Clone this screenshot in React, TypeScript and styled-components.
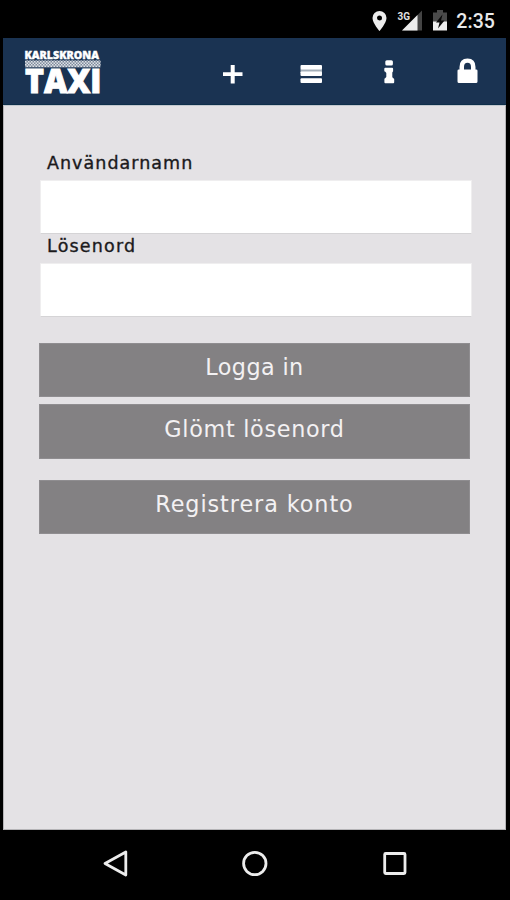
import React from "react";
import styled, { createGlobalStyle } from "styled-components";

const GlobalStyle = createGlobalStyle`
  * { box-sizing: border-box; }
  body { margin: 0; background: #000; }
`;

const Device = styled.div`
  width: 510px;
  height: 900px;
  background: #000;
  display: flex;
  flex-direction: column;
  overflow: hidden;
  font-family: "DejaVu Sans", Inter, sans-serif;
`;

const StatusBar = styled.div`
  height: 38px;
  flex: none;
  display: flex;
  justify-content: flex-end;
  align-items: flex-start;
  padding: 10px 15px 0 0;
`;

const StatusIcons = styled.svg`
  display: block;
  width: 78px;
  height: 24px;
  margin-right: 7px;
`;

const Clock = styled.time`
  font: 500 19.5px/23px Roboto, sans-serif;
  letter-spacing: 0.1px;
  color: #e9e9e9;
`;

const Header = styled.header`
  height: 67px;
  flex: none;
  margin: 0 4px 0 3px;
  padding-left: 19px;
  display: flex;
  justify-content: space-between;
  background: #1a3352;
  border-bottom: 1px solid #0e2f4a;
`;

const Logo = styled.svg`
  display: block;
  width: 84px;
  height: 50px;
  margin-top: 10px;
  overflow: visible;
`;

const Actions = styled.nav`
  display: grid;
  grid-template-columns: repeat(4, 78px);
`;

const Action = styled.button`
  border: 0;
  padding: 0;
  background: none;
  height: 66px;
`;

const ActionIcon = styled.svg`
  display: block;
  width: 78px;
  height: 66px;
  fill: #fff;
`;

const Screen = styled.main`
  flex: 1;
  margin: 0 4px 0 3px;
  padding: 45px 35px 0 36px;
  background: #e4e2e5;
  border: 1px solid #b5b4b7;
  border-top-color: #c3c8cf;
`;

const Form = styled.form`
  display: flex;
  flex-direction: column;
`;

const Label = styled.label<{ $spacing: number }>`
  height: 29px;
  padding-left: 7px;
  font-size: 17.5px;
  line-height: 25px;
  letter-spacing: ${(p) => p.$spacing}px;
  color: #1b1a1c;
  -webkit-text-stroke: 0.35px #1b1a1c;
  white-space: nowrap;
`;

const Input = styled.input`
  width: 432px;
  height: 54px;
  border: 1px solid #efeeef;
  border-bottom-color: #d5d4d6;
  border-radius: 1px;
  padding: 0 10px;
  background: #fff;
  font: inherit;
  outline: 0;
`;

const Buttons = styled.div`
  display: flex;
  flex-direction: column;
  gap: 7px;
  margin: 26px 0 0 -1px;
`;

const Button = styled.button<{ $spacing: number; $separate?: boolean }>`
  width: 431px;
  height: 54.3px;
  margin-top: ${(p) => (p.$separate ? 14 : 0)}px;
  padding: 0 0 5.4px;
  border: 1px solid #8f8d90;
  background: #838183;
  color: #f3f1f3;
  font-family: inherit;
  font-size: 22.3px;
  line-height: 28px;
  letter-spacing: ${(p) => p.$spacing}px;
`;

const NavBar = styled.div`
  height: 70px;
  flex: none;
  display: flex;
  justify-content: center;
`;

const NavIcon = styled.svg`
  display: block;
  width: 139.5px;
  height: 68px;
  fill: none;
  stroke: #ececec;
  stroke-width: 2.8;
  stroke-linejoin: round;
`;

export default function App() {
  return (
    <>
      <GlobalStyle />
      <Device>
        <StatusBar>
          <StatusIcons viewBox="371 10 78 24">
            <path
              d="M379.5 11a7 7 0 0 0-7 7c0 5 7 13 7 13s7-8 7-13a7 7 0 0 0-7-7Zm0 4.500a2.500 2.500 0 1 1 0 5 2.500 2.500 0 0 1 0-5Z"
              fill="#ededed"
            />
            <path d="M422 10.500V30.500H402Z" fill="#444" />
            <path d="M417.500 15V30.500H402Z" fill="#ededed" />
            <text
              x="397.500"
              y="19.500"
              fontFamily="Roboto, sans-serif"
              fontWeight="700"
              fontSize="10.500"
              textLength="12.500"
              lengthAdjust="spacingAndGlyphs"
              fill="#e0e0e0"
              stroke="#000"
              strokeWidth="1.500"
              paintOrder="stroke"
            >
              3G
            </text>
            <path d="M433 12.500h4V10h6v2.500h4V22h-14Z" fill="#4a4a4a" />
            <path d="M433 21.500h14v9h-14Z" fill="#ededed" />
            <path d="M442.500 14.500 436 22.500h3.500l-1.500 6 6.500-8h-3.500Z" fill="#080808" />
          </StatusIcons>
          <Clock>2:35</Clock>
        </StatusBar>

        <Header>
          <Logo viewBox="22 48 84 50" role="img" aria-label="Karlskrona Taxi">
            <defs>
              <pattern id="checks" x="25" y="61" width="3" height="3" patternUnits="userSpaceOnUse">
                <path d="M0 0h1.500v1.500H0ZM1.500 1.500H3V3H1.500Z" fill="#fff" />
              </pattern>
            </defs>
            <g fill="#fff" stroke="#fff" fontFamily="'Open Sans', sans-serif" fontWeight="800">
              <text x="24.500" y="58.600" fontSize="11" textLength="74.500" lengthAdjust="spacingAndGlyphs" strokeWidth=".4">
                KARLSKRONA
              </text>
              <text x="25" y="92.900" fontSize="33" textLength="76.500" lengthAdjust="spacingAndGlyphs" strokeWidth="1">
                TAXI
              </text>
            </g>
            <path d="M25 60.500h75.500v7H25Z" fill="#7d8a9c" />
            <path d="M25 60.500h75.500v6.500H25Z" fill="url(#checks)" opacity=".75" />
          </Logo>
          <Actions>
            <Action aria-label="Ny">
              <ActionIcon viewBox="194 38 78 66">
                <path d="M230.700 65h4v7.200h7.800v3.800h-7.800v7.500h-4V76H223v-3.800h7.700Z" />
              </ActionIcon>
            </Action>
            <Action aria-label="Meny">
              <ActionIcon viewBox="272 38 78 66">
                <rect x="300.500" y="69" width="21.500" height="4" fill="#a4afb9" />
                <rect x="300.500" y="65" width="21.500" height="4.500" rx="1" />
                <rect x="300.500" y="71.600" width="21.500" height="4.400" rx="1" />
                <rect x="300.500" y="78.200" width="21.500" height="4.800" rx="1" />
              </ActionIcon>
            </Action>
            <Action aria-label="Information">
              <ActionIcon viewBox="350 38 78 66">
                <rect x="385.300" y="60.200" width="7.600" height="5.400" rx="1.500" />
                <path d="M385.300 67.800h6.800q1 0 1 1v2.400l-.8 1.300v4.500l.8 1.300h.2q.9 0 .9.900v3q0 1-.9 1h-8q-.9 0-.9-1v-3q0-.9.700-.9l1.200-1.300v-4l-1-1.200q-1 0-1-1v-2q0-1 1-1Z" />
              </ActionIcon>
            </Action>
            <Action aria-label="Konto">
              <ActionIcon viewBox="428 38 78 66">
                <path
                  fillRule="evenodd"
                  d="M459.500 69.500V67q0-8.500 8-8.500t8 8.500v2.500h.7q1.300 0 1.300 1.300v10.700q0 1.500-1.500 1.500h-17q-1.500 0-1.500-1.500V70.800q0-1.300 1.300-1.300Zm4.500 0h7V67q0-4.200-3.500-4.200t-3.500 4.200Z"
                />
              </ActionIcon>
            </Action>
          </Actions>
        </Header>

        <Screen>
          <Form onSubmit={(e) => e.preventDefault()}>
            <Label htmlFor="user" $spacing={1.03}>Användarnamn</Label>
            <Input id="user" />
            <Label htmlFor="password" $spacing={1.2}>Lösenord</Label>
            <Input id="password" type="password" />
            <Buttons>
              <Button $spacing={0.4}>Logga in</Button>
              <Button type="button" $spacing={0.7}>Glömt lösenord</Button>
              <Button type="button" $separate $spacing={0.93}>Registrera konto</Button>
            </Buttons>
          </Form>
        </Screen>

        <NavBar>
          <NavIcon viewBox="45.500 830 139.500 68">
            <path d="M125.300 852v23L104.500 863.500Z" />
          </NavIcon>
          <NavIcon viewBox="185 830 139.500 68">
            <circle cx="254.800" cy="863.500" r="11.200" />
          </NavIcon>
          <NavIcon viewBox="324.500 830 139.500 68">
            <rect x="384.200" y="853.500" width="20.300" height="20" rx="1" />
          </NavIcon>
        </NavBar>
      </Device>
    </>
  );
}
